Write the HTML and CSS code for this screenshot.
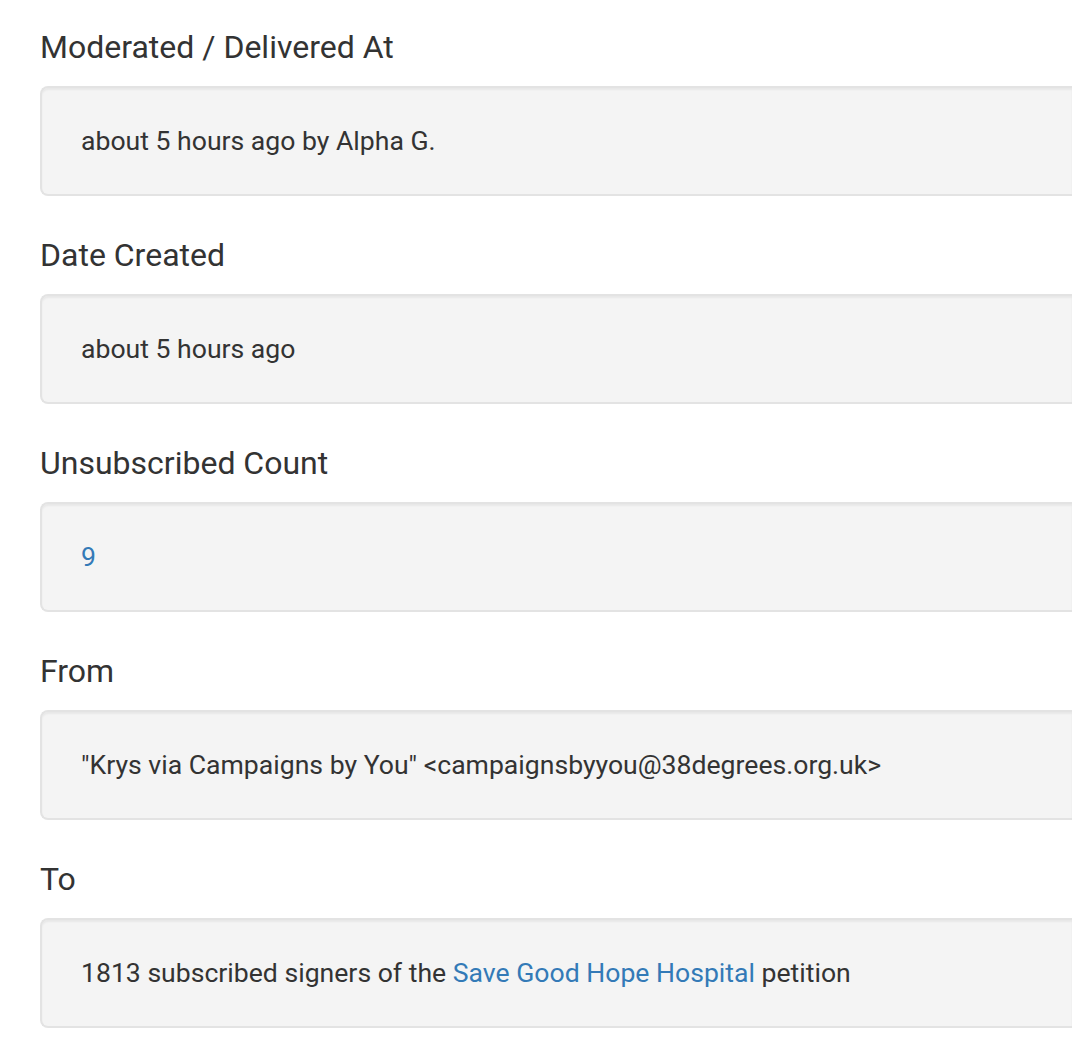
FILE: index.html
```html
<!DOCTYPE html>
<html lang="en">
  <head>
    <meta charset="UTF-8" />
    <title>Mailing details</title>
    <link rel="stylesheet" href="styles.css">
  </head>
  <body>
    <div class="details">
      <div class="field">
        <div class="field-label">Moderated / Delivered At</div>
        <div class="well">about 5 hours ago by Alpha G.</div>
      </div>

      <div class="field">
        <div class="field-label">Date Created</div>
        <div class="well">about 5 hours ago</div>
      </div>

      <div class="field">
        <div class="field-label">Unsubscribed Count</div>
        <div class="well"><a href="#">9</a></div>
      </div>

      <div class="field">
        <div class="field-label">From</div>
        <div class="well">"Krys via Campaigns by You" &lt;campaignsbyyou@38degrees.org.uk&gt;</div>
      </div>

      <div class="field">
        <div class="field-label">To</div>
        <div class="well">1813 subscribed signers of the <a href="#">Save Good Hope Hospital</a> petition</div>
      </div>
    </div>
  </body>
</html>
```

FILE: styles.css
```css
html,
body {
  margin: 0;
  padding: 0;
  overflow: hidden;
}

body {
  font-family: Roboto, "Helvetica Neue", Arial, sans-serif;
  color: #333;
  background-color: #fff;
}

a {
  color: #337ab7;
  text-decoration: none;
}

.details {
  padding: 26px 0 0 40px;
}

.field-label {
  font-size: 32px;
  line-height: 42px;
  margin-bottom: 18px;
}

/* the well runs on past the right edge of the window */
.well {
  font-size: 26.6px;
  line-height: 40px;
  padding: 33px 39px;
  margin-bottom: 38px;
  background-color: #f4f4f4;
  border: 2px solid #e3e3e3;
  border-right: 0;
  border-radius: 8px 0 0 8px;
  box-shadow: inset 0 2px 2px rgba(0, 0, 0, 0.05);
}
```
